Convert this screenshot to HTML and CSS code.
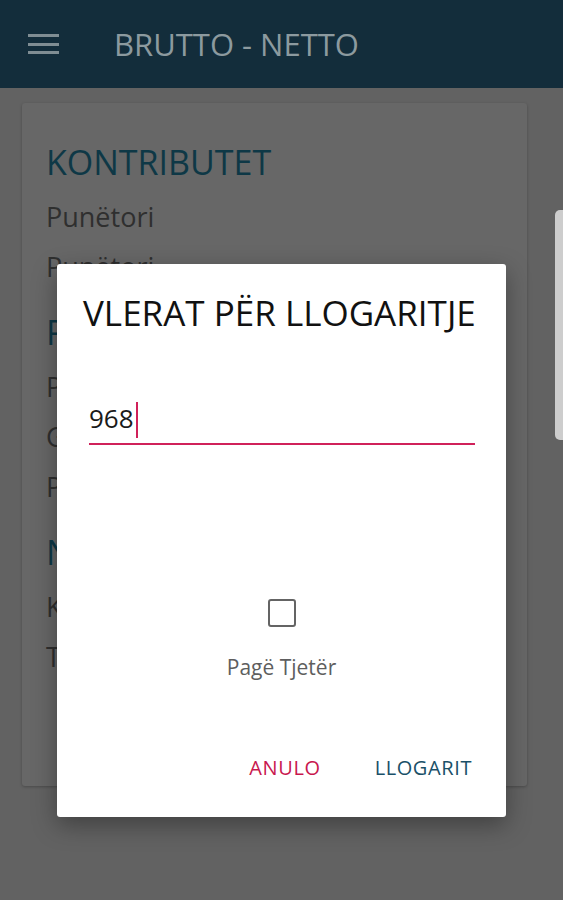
FILE: index.html
```html
<!DOCTYPE html>
<html lang="sq">
<head>
    <meta charset="UTF-8">
    <meta name="viewport" content="width=device-width, initial-scale=1.0">
    <title>Brutto - Netto</title>
    <link rel="stylesheet" href="styles.css">
</head>
<body>
    <div id="appbar">
        <span class="menu">
            <i></i><i></i><i></i>
        </span>
        <h1>BRUTTO - NETTO</h1>
    </div>

    <div id="card">
        <div class="section">
            <h2>KONTRIBUTET</h2>
            <p>Punëtori</p>
            <p>Punëtori</p>
        </div>
        <div class="section">
            <h2>PAGA</h2>
            <p>Paga bruto</p>
            <p>Gjithsej</p>
            <p>Paga neto</p>
        </div>
        <div class="section">
            <h2>NETO</h2>
            <p>Kontributet</p>
            <p>Tatimi</p>
        </div>
    </div>

    <span id="handle"></span>

    <div id="overlay">
        <div id="dialog">
            <h3>VLERAT PËR LLOGARITJE</h3>
            <div class="field">
                <span class="value">968</span><span class="caret"></span>
            </div>
            <div class="check">
                <span class="box"></span>
                <label>Pagë Tjetër</label>
            </div>
            <div class="actions">
                <span class="btn cancel">ANULO</span>
                <span class="btn ok">LLOGARIT</span>
            </div>
        </div>
    </div>
</body>
</html>
```

FILE: styles.css
```css
*{
    padding: 0;
    margin: 0;
    box-sizing: border-box;
}
body{
    width: 563px;
    height: 900px;
    overflow: hidden;
    background-color: #626262;
    font-family: "Open Sans", "Noto Sans", sans-serif;
    position: relative;
}
#appbar{
    height: 88px;
    background-color: #132d3b;
    display: flex;
    align-items: center;
}
#appbar>.menu{
    width: 31px;
    margin-left: 28px;
    display: flex;
    flex-direction: column;
    gap: 5.5px;
}
#appbar>.menu>i{
    display: block;
    height: 3px;
    background-color: #7f8d93;
}
#appbar>h1{
    margin-left: 55px;
    font-size: 31px;
    font-weight: 400;
    color: #8c9a9f;
    line-height: 40px;
}
#card{
    width: 505px;
    margin: 15px 0 0 22px;
    padding: 39px 24px 104px;
    background-color: #676767;
    border-radius: 3px;
    box-shadow: 0 1px 3px rgba(0,0,0,0.25);
}
.section+.section{
    margin-top: 20px;
}
.section>h2{
    font-size: 34px;
    font-weight: 400;
    line-height: 40px;
    color: #0e3846;
    margin-bottom: 10px;
}
.section>p{
    font-size: 27px;
    line-height: 50px;
    color: #2f2f2f;
}
#handle{
    position: absolute;
    top: 210px;
    right: 0;
    width: 8px;
    height: 230px;
    background-color: #cdcdcd;
    border-radius: 5px 0 0 5px;
}
/* dialog over the dimmed page */
#overlay{
    position: absolute;
    top: 0;
    left: 0;
    right: 0;
    bottom: 0;
    display: flex;
    justify-content: center;
    align-items: flex-start;
    padding-top: 264px;
}
#dialog{
    width: 449px;
    height: 553px;
    background-color: #fff;
    border-radius: 3px;
    box-shadow: 0 8px 24px rgba(0,0,0,0.35);
    padding: 29px 31px 0 26px;
    display: flex;
    flex-direction: column;
}
#dialog>h3{
    font-size: 35px;
    font-weight: 400;
    line-height: 40px;
    color: #111;
    white-space: nowrap;
}
.field{
    margin: 70px 0 0 6px;
    height: 42px;
    border-bottom: 2px solid #d0215a;
    display: flex;
    align-items: flex-start;
}
.field>.value{
    font-size: 26px;
    line-height: 30px;
    color: #1a1a1a;
}
.field>.caret{
    width: 2px;
    height: 36px;
    margin: -1px 0 0 2px;
    background-color: #d0215a;
}
.check{
    margin-top: 154px;
    display: flex;
    flex-direction: column;
    align-items: center;
    padding-left: 5px;
}
.check>.box{
    width: 28px;
    height: 28px;
    border: 2.5px solid #646464;
    border-radius: 3px;
}
.check>label{
    margin-top: 27px;
    font-size: 21px;
    line-height: 26px;
    color: #5e5e5e;
}
.actions{
    margin-top: 76px;
    display: flex;
    justify-content: flex-end;
    gap: 54px;
    padding-right: 3px;
}
.btn{
    font-size: 20px;
    line-height: 24px;
    letter-spacing: 0.6px;
}
.cancel{
    color: #c8174e;
}
.ok{
    color: #1a5068;
}
```
